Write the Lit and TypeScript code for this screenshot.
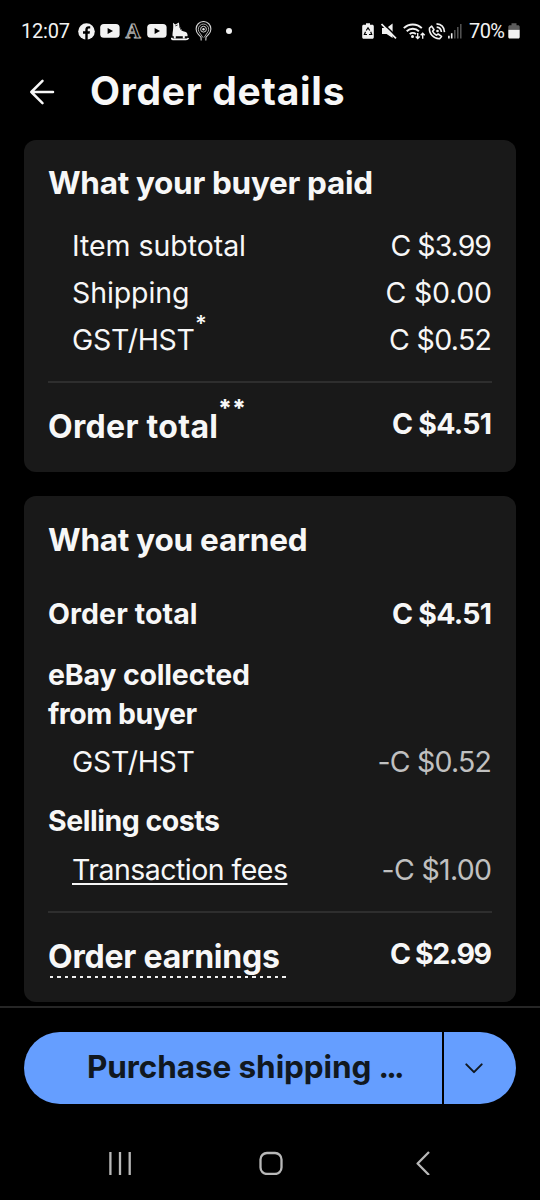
import { LitElement, html, css } from "lit";
import { customElement, property } from "lit/decorators.js";

/** One line of text whose tracking is adjusted to fill a given width. */
@customElement("fit-line")
class FitLine extends LitElement {
  @property({ type: Number }) width = 0;
  @property() text = "";
  @property({ type: Boolean }) underline = false;

  static styles = css`
    :host { display: block; flex: none; white-space: pre; }
    .run { display: inline-block; }
    .underline { text-decoration: underline; text-decoration-thickness: 2px; text-underline-offset: 3px; text-decoration-skip-ink: none; }
  `;

  render() {
    return html`<span class=${this.underline ? "run underline" : "run"}>${this.text}</span>`;
  }

  firstUpdated() {
    const run = this.renderRoot.querySelector(".run") as HTMLElement;
    const natural = run.getBoundingClientRect().width;
    this.style.width = `${this.width}px`;
    this.style.letterSpacing = `${(this.width - natural) / (this.text.length - 1)}px`;
  }
}

const line = (text: string, width: number, underline = false) =>
  html`<fit-line .text=${text} .width=${width} .underline=${underline}></fit-line>`;

const youtube = html`<svg class="yt" width="20" height="14" viewBox="0 0 20 14">
  <rect x=".2" y="0" width="19.4" height="13.8" rx="3.6" fill="#f2f2f2" />
  <path d="M7.6 3.9 13 6.9 7.6 9.9Z" fill="#000" />
</svg>`;

@customElement("status-bar")
class StatusBar extends LitElement {
  static styles = css`
    :host { display: flex; height: 62px; align-items: center; box-sizing: border-box;
      font: 400 20px/24px Roboto, sans-serif; color: #f2f2f2; padding-left: 21px; padding-right: 20px; }
    svg { display: block; flex: none; }
    .fb { margin-left: 8px; }
    .yt { margin-left: 5px; }
    .letter { width: 16px; margin: 0 5px 0 5px; text-align: center; color: #000;
      font: 700 21px/20px "Liberation Serif", serif; -webkit-text-stroke: 1px #b4b4b4; }
    .letter + .yt { margin-left: 1px; }
    .skate { margin-left: 4px; }
    .cast { margin-left: 6px; }
    .dot { width: 6px; height: 6px; border-radius: 50%; background: #f2f2f2; margin-left: 14px; }
    .space { flex: 1; }
    .mute { margin-left: 7px; }
    .wifi { margin-left: 6px; }
    .call { margin-left: 2px; }
    .signal { margin-left: 2px; }
    .pct { margin-left: 7px; }
    .level { margin-left: 3px; }
  `;

  render() {
    return html`
      ${line("12:07", 49)}
      <svg class="fb" width="17" height="17" viewBox="0 0 17 17">
        <circle cx="8.5" cy="8.5" r="8.3" fill="#f2f2f2" />
        <path d="M7.3 17V10.8H5V8.3h2.3V6.7c0-2.3 1.4-3.4 3.3-3.4h1.6v2.1h-1.2c-1 0-1.3.6-1.3 1.4v1.5H12l-.4 2.5H9.7V17Z" fill="#000" />
      </svg>
      ${youtube}
      <span class="letter">A</span>
      ${youtube}
      <svg class="skate" width="18" height="19" viewBox="0 0 18 19">
        <path d="M2 .8 4.300 2.400 7.900.6 8.600 6c.8 2.400 2.600 3.200 5.400 3.800 2 .5 2.700 1.800 2.600 4.400H1.600C1.200 10.200 2.800 8 2 .8Z" fill="#f2f2f2" />
        <path d="M4.300 3.900 6.600 3" stroke="#000" stroke-width=".8" />
        <path d="M7.600 6.800 9.600 6M8.600 8.900 10.600 7.600" stroke="#f2f2f2" stroke-width=".8" />
        <path d="M3.800 14v2.500M12.800 14v2.500" stroke="#f2f2f2" stroke-width="2" />
        <path d="M.8 15.700c0 1 .4 1.700 1.200 1.700H15c1.400 0 2.100-.5 2.300-1.600" fill="none" stroke="#f2f2f2" stroke-width="1.800" />
      </svg>
      <svg class="cast" width="17" height="20" viewBox="0 0 17 20" fill="none" stroke="#d2d2d2">
        <path d="M6.200 19.500 6 16.200 3.400 13.300A7.400 7.400 0 1 1 13.600 13.300L11 16.200 10.800 19.500" stroke-width="1.100" />
        <path d="M7.900 16.500 4.900 12A5.200 5.200 0 1 1 12.100 12L9.100 16.500" stroke-width=".8" />
        <circle cx="8.500" cy="8.200" r="2.900" stroke-width="1" />
        <circle cx="8.500" cy="8.200" r="1.200" fill="#e4e4e4" stroke="none" />
      </svg>
      <span class="dot"></span>
      <span class="space"></span>
      <svg width="12" height="16" viewBox="0 0 12 16">
        <path d="M4 .2h4v1.600h2.300c.9 0 1.500.6 1.500 1.500v10.900c0 .9-.6 1.500-1.500 1.500H1.700c-.9 0-1.500-.6-1.500-1.500V3.300c0-.9.6-1.500 1.500-1.500H4Z" fill="#f2f2f2" />
        <path d="M4.200 7.500 6 4.900 7.800 7.500M8.700 8.700 9.700 11.500H7M5 11.500H2.400L3.500 8.700" fill="none" stroke="#000" stroke-width="1.200" />
      </svg>
      <svg class="mute" width="16" height="16" viewBox="0 0 16 16">
        <path d="M1 5H5.600L11.600.6V14.900L5.600 10.900H1Z" fill="#f2f2f2" />
        <path d="M1.700-.1 15.900 13.900" stroke="#000" stroke-width="1.600" />
        <path d="M.5 1 15 15.300" stroke="#f2f2f2" stroke-width="1.700" />
      </svg>
      <svg class="wifi" width="23" height="17" viewBox="0 0 23 17" fill="none" stroke="#f2f2f2" stroke-width="1.900">
        <path d="M.8 5.200C5.800.2 13.800.2 18.800 5.200M3.700 8.200c3.400-3.300 8.800-3.300 12.200 0M6.700 11.100c1.700-1.600 4.500-1.600 6.200 0" />
        <circle cx="9.500" cy="13.400" r="1.500" fill="#f2f2f2" stroke="none" />
        <path d="M14.700 10v5.500M12.700 13.500l2 2 2-2M19.700 15.800V10.200M17.700 12.200l2-2 2 2" stroke-width="1.400" />
      </svg>
      <svg class="call" width="18" height="17" viewBox="0 0 18 17" fill="none" stroke="#f2f2f2" stroke-width="1.600">
        <path d="M3.700 3.200 1.500 5C.7 10.500 5.800 16 11.600 15.700l1.900-2.300-3.300-2.400-1.700 1.200C6.500 11.200 5.400 10 4.600 8.200L6 6.600Z" stroke-linejoin="round" />
        <path d="M8.500.9c4.700.2 7.700 3.400 8 8.200M8.700 4.100c2.800.2 4.400 2 4.700 4.900" />
        <circle cx="9.500" cy="8" r="1.300" fill="#f2f2f2" stroke="none" />
      </svg>
      <svg class="signal" width="14" height="16" viewBox="0 0 14 16">
        <path d="M.9 12.800v2.700M3.700 10.200v5.300" stroke="#f2f2f2" stroke-width="1.600" />
        <path d="M6.800 7v8.500M9.800 4v11.500M12.800 1v14.500" stroke="#555" stroke-width="1.500" />
      </svg>
      <span class="pct">${line("70%", 36)}</span>
      <svg class="level" width="12" height="16" viewBox="0 0 12 16">
        <path d="M3.500.3h5v1.900H10c1 0 1.700.6 1.700 1.600v3H.3v-3c0-1 .7-1.600 1.700-1.600h1.500Z" fill="#5c5c5c" />
        <path d="M.3 6.800h11.400v7.300c0 .9-.5 1.500-1.500 1.500H1.800c-1 0-1.500-.6-1.500-1.500Z" fill="#f2f2f2" />
      </svg>
    `;
  }
}

@customElement("app-root")
class AppRoot extends LitElement {
  static styles = css`
    :host { display: flex; flex-direction: column; height: 1200px; overflow: hidden; background: #000;
      color: #f7f7f7; font-family: Inter, "Liberation Sans", sans-serif; }
    svg { display: block; }
    .head { display: flex; height: 78px; box-sizing: border-box; padding: 4px 0 0 29px; flex: none; }
    .arrow { margin: 13px 35px 0 0; }
    .page-title { font-size: 39px; font-weight: 700; line-height: 49px; margin: 0; }
    .card { background: #191919; border-radius: 12px; margin: 0 24px; padding: 24px 24px 0;
      box-sizing: border-box; flex: none; }
    .paid { height: 332px; }
    .earned { height: 506px; margin-top: 24px; padding-top: 25px; }
    .card-title { font-size: 31.500px; line-height: 37px; font-weight: 700; margin: 0; }
    .row { display: flex; justify-content: space-between; font-size: 28.500px; line-height: 39px; }
    .sub { padding-left: 24px; }
    .strong { font-weight: 700; }
    .items { display: flex; flex-direction: column; gap: 8px; margin-top: 25px; }
    .label { display: flex; }
    .star { font-size: 22px; font-weight: 600; line-height: 20px; height: 20px; margin-top: -7px; }
    .stars { font-size: 24px; font-weight: 800; line-height: 24px; height: 24px; margin-top: -10px; }
    .rule { height: 2px; background: #2e2e2e; margin-top: 22px; }
    .total { font-size: 28.500px; font-weight: 700; margin-top: 21px; display: flex; justify-content: space-between; line-height: 39px; }
    .total .label { font-size: 32px; line-height: 40px; margin-top: 3px; }
    .g36 { margin-top: 36px; }
    .g22 { margin-top: 22px; }
    .g9 { margin-top: 9px; }
    .g20 { margin-top: 20px; }
    .g10 { margin-top: 10px; }
    .muted { color: #c0c0c0; }
    .dashes { height: 2px; width: 237px; margin: -1px 0 0 2px;
      background: repeating-linear-gradient(90deg, #f0f0f0 0 3.500px, transparent 3.500px 7.500px); }
    .footer { border-top: 2px solid #262626; margin-top: 4px; padding: 24px 24px 0; height: 98px; box-sizing: border-box; flex: none; }
    .split { display: flex; height: 72px; gap: 2px; color: #111820; }
    .buy { display: flex; gap: 7px; width: 418px; box-sizing: border-box; padding-left: 63px; background: #659eff; border-radius: 36px 0 0 36px;
      font-size: 31.500px; font-weight: 700; line-height: 69px; }
    .more { flex: 1; background: #659eff; border-radius: 0 36px 36px 0; display: flex; align-items: center; padding-left: 20px; }
    .nav { display: flex; padding: 47px 109px 0 109px; }
    .nav svg { flex: none; }
    .home { margin-left: 128px; }
    .back { margin-left: 132px; }
  `;

  render() {
    return html`
      <status-bar></status-bar>
      <header class="head">
        <svg class="arrow" width="26" height="26" viewBox="0 0 26 26" fill="none" stroke="#f7f7f7" stroke-width="2.500" stroke-linecap="round" stroke-linejoin="round">
          <path d="M13.500 1.900 2.300 13 13.500 24.100M2.300 13H24" />
        </svg>
        <h1 class="page-title">${line("Order details", 254.5)}</h1>
      </header>

      <section class="card paid">
        <h2 class="card-title">${line("What your buyer paid", 325)}</h2>
        <div class="items">
          <div class="row sub">${line("Item subtotal", 174)}${line("C $3.99", 101.5)}</div>
          <div class="row sub">${line("Shipping", 117.5)}${line("C $0.00", 106.5)}</div>
          <div class="row sub">
            <div class="label">${line("GST/HST", 123)}<span class="star">*</span></div>
            ${line("C $0.52", 103)}
          </div>
        </div>
        <div class="rule"></div>
        <div class="total">
          <div class="label">${line("Order total", 170)}<span class="stars">**</span></div>
          ${line("C $4.51", 100)}
        </div>
      </section>

      <section class="card earned">
        <h2 class="card-title">${line("What you earned", 259.5)}</h2>
        <div class="row strong g36">${line("Order total", 149.5)}${line("C $4.51", 100)}</div>
        <div class="row strong g22">${line("eBay collected", 202)}</div>
        <div class="row strong">${line("from buyer", 149)}</div>
        <div class="row sub g9">${line("GST/HST", 123)}<span class="muted">${line("-C $0.52", 114.5)}</span></div>
        <div class="row strong g20">${line("Selling costs", 172)}</div>
        <div class="row sub g10">${line("Transaction fees", 216, true)}<span class="muted">${line("-C $1.00", 110.5)}</span></div>
        <div class="rule"></div>
        <div class="total">
          <div class="label">${line("Order earnings", 232)}</div>
          ${line("C $2.99", 102)}
        </div>
        <div class="dashes"></div>
      </section>

      <footer class="footer">
        <div class="split">
          <div class="buy">${line("Purchase shipping", 284.5)}${line("...", 26)}</div>
          <div class="more">
            <svg width="20" height="14" viewBox="0 0 20 14" fill="none" stroke="#111820" stroke-width="2" stroke-linecap="round" stroke-linejoin="round">
              <path d="M2.300 3.400 10 11.100 17.700 3.400" />
            </svg>
          </div>
        </div>
      </footer>
      <nav class="nav">
        <svg width="22" height="24" viewBox="0 0 22 24" stroke="#b8b8b8" stroke-width="2.300">
          <path d="M1.400 1v23M11 1v23M20.700 1v23" />
        </svg>
        <svg class="home" width="24" height="24" viewBox="0 0 24 24" fill="none" stroke="#b8b8b8" stroke-width="2.300">
          <rect x="1.500" y="2" width="21" height="21" rx="6.500" />
        </svg>
        <svg class="back" width="16" height="24" viewBox="0 0 16 24" fill="none" stroke="#b8b8b8" stroke-width="2.300">
          <path d="M14 1 2.600 12.500 14 24" stroke-linejoin="round" />
        </svg>
      </nav>
    `;
  }
}
